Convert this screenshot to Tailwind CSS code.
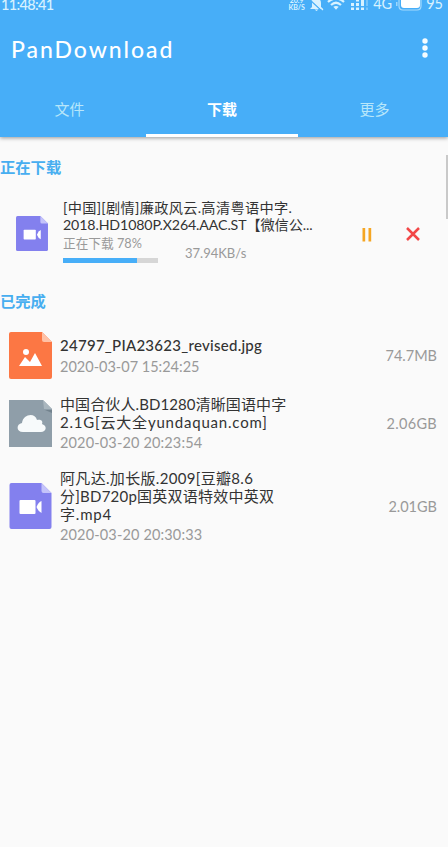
<!DOCTYPE html>
<html lang="zh-CN">
<head>
<meta charset="utf-8">
<title>PanDownload</title>
<script src="https://cdn.jsdelivr.net/npm/@tailwindcss/browser@4"></script>
</head>
<body class="w-[448px] h-[847px] overflow-hidden relative bg-[#fafafa] text-[#333] font-['Lato','Noto_Sans_CJK_SC',sans-serif] whitespace-nowrap">
<header class="h-[137px] bg-[#47aef8] text-white shadow-[0_1px_4px_rgba(0,0,0,0.4)] flex flex-col">
  <div class="h-[14px] flex justify-between overflow-hidden text-[#d8f2ff]">
    <span class="text-[14.5px] leading-[18px] -mt-[4px] pl-px tracking-[-0.65px] font-medium">11:48:41</span>
    <div class="flex items-start pr-[5px]">
      <div class="text-[7px] leading-[7px] -mt-[3px] font-bold text-center w-[17px]"><p>20.9</p><p>KB/S</p></div>
      <svg class="ml-[4px] -mt-[2px]" width="15" height="14" viewBox="0 0 15 14"><path d="M3 9V5C3 2 5 0 7.500 0S12 2 12 5v4l2 2H1zM5.500 11.500h4l-2 1.500z" fill="currentColor"/><path d="M0 1l13 12" stroke="#47aef8" stroke-width="1.300"/><path d="M1 0l13 12" stroke="currentColor" stroke-width="1.200"/></svg>
      <svg class="ml-[3px] -mt-[3px]" width="18" height="13" viewBox="0 0 18 13" fill="none" stroke="currentColor" stroke-width="2.200"><path d="M1 5Q9-2 17 5M4 8Q9 3.500 14 8"/><path d="M6.300 9.800Q9 8 11.700 9.800L9 12.800z" fill="currentColor" stroke="none"/></svg>
      <svg class="ml-[6px]" width="17" height="10" viewBox="0 0 17 10" fill="currentColor"><path d="M0 3h3v3H0zM0 7.500h3V10H0zM5 3h3v3H5zM5 7.500h3V10H5zM10 0h3v6h-3zM10 7.500h3V10h-3zM5 0h3v1.500H5z"/><path d="M15 0h2v6h-2zM15 7.500h2V10h-2z" opacity=".35"/></svg>
      <span class="ml-[5px] text-[14.5px] leading-[18px] -mt-[5px] w-[19px]">4G</span>
      <svg class="ml-[4px]" width="26" height="11" viewBox="0 0 26 11"><path d="M3-3v9q0 4 4 4h14q4 0 4-4v-9" fill="none" stroke="currentColor" stroke-width="1.200" opacity=".65"/><path d="M5-1h19v6q0 3-3 3H8Q5 8 5 5z" fill="white"/><path d="M0 2h1.500v4H0z" fill="currentColor" opacity=".6"/></svg>
      <span class="ml-[4px] text-[14.5px] leading-[18px] -mt-[5px]">95</span>
    </div>
  </div>
  <div class="h-[71px] flex justify-between pl-[11px] pr-[20px] pt-[20px]">
    <h1 class="text-[23px] leading-[31px] tracking-[1.95px] font-medium">PanDownload</h1>
    <svg class="mt-[4px]" width="6" height="20" viewBox="0 0 6 20" fill="#f4fcff"><circle cx="3" cy="3" r="2.700"/><circle cx="3" cy="10" r="2.700"/><circle cx="3" cy="17" r="2.700"/></svg>
  </div>
  <nav class="h-[52px] grid grid-cols-[146px_152px_150px] text-center text-[15px] leading-[48px] text-[#b7e6fa]">
    <span class="pr-[7px]">文件</span>
    <span class="text-white font-bold border-b-[3px] border-white">下载</span>
    <span class="pl-[3px]">更多</span>
  </nav>
</header>
<main>
  <h2 class="pt-[19px] text-[15.3px] leading-[22px] font-bold text-[#47aef0]">正在下载</h2>
  <section class="h-[112px] flex pt-[21px]">
    <svg class="ml-[16px] mt-[17px] shrink-0" width="32" height="35" viewBox="0 0 42 46"><path d="M2 0h30l10 10v34q0 2-2 2H2q-2 0-2-2V2q0-2 2-2z" fill="#8380ee"/><path d="M32 0l10 10h-8q-2 0-2-2z" fill="#c4c3fa"/><rect x="10" y="18" width="16" height="13" rx="1" fill="white"/><path d="M27.500 24.500q2-5 5-6v12q-3-1-5-6z" fill="white"/></svg>
    <div class="ml-[15px] w-[260px]">
      <div class="text-[14.2px] leading-[17px]"><p class="tracking-[0.32px]">[中国][剧情]廉政风云.高清粤语中字.</p><p class="tracking-[-0.12px]">2018.HD1080P.X264.AAC.ST【微信公...</p></div>
      <div class="flex text-[#999]">
        <div class="w-[122px]"><p class="text-[12.7px] leading-[20px]">正在下载 78%</p><div class="mt-[5px] w-[95px] h-[5px] bg-[#d6d6d6]"><div class="w-[78%] h-full bg-[#47aef8]"></div></div></div>
        <p class="pt-[11px] text-[13px] leading-[18px]">37.94KB/s</p>
      </div>
    </div>
    <svg class="ml-[39px] mt-[29px]" width="10" height="14" viewBox="0 0 10 14"><path d="M.5 0h2.700v13.500H.5zM6.500 0h2.700v13.500H6.500z" fill="#f5a623"/></svg>
    <svg class="ml-[34px] mt-[28px]" width="14" height="14" viewBox="0 0 14 14"><path d="M1 1l12 12M13 1L1 13" stroke="#f24848" stroke-width="2.500"/></svg>
  </section>
  <h2 class="text-[15.3px] leading-[22px] font-bold text-[#47aef0]">已完成</h2>
  <ul class="text-[15px] leading-[18px]">
    <li class="mt-[19px] h-[48px] flex items-center pl-[9px] pr-[11px]">
      <svg class="shrink-0" width="43" height="47" viewBox="0 0 43 47"><path d="M2 0h31l10 10v35q0 2-2 2H2q-2 0-2-2V2q0-2 2-2z" fill="#fc7744"/><path d="M33 0l10 10h-8q-2 0-2-2z" fill="#ffc1a6"/><circle cx="17" cy="20" r="3" fill="white"/><path d="M10 34l6-9 5 5 5-9 7 13z" fill="white"/></svg>
      <div class="ml-[8px] grow pt-px"><p class="leading-[21px] tracking-[0.27px] font-medium">24797_PIA23623_revised.jpg</p><p class="text-[14.5px] leading-[21px] text-[#999]">2020-03-07 15:24:25</p></div>
      <span class="pt-[2px] text-[14.5px] text-[#999]">74.7MB</span>
    </li>
    <li class="mt-[15px] h-[58px] flex items-center pl-[9px] pr-[11px]">
      <svg class="shrink-0" width="43" height="47" viewBox="0 0 43 47"><path d="M0 0h34l9 9v38H0z" fill="#8f9ea9"/><path d="M34 0l9 9h-8z" fill="#a9b6be"/><path d="M36 10h7v3z" fill="#73838e"/><path d="M14 32c-7 0-7-8-1-9 1-9 13-11 15-3 5-1 6 2 5 4 6 2 4 8-1 8z" fill="#f7fafb"/></svg>
      <div class="ml-[8px] grow pt-[3px]"><p class="tracking-[0.1px]">中国合伙人.BD1280清晰国语中字</p><p class="tracking-[0.8px]">2.1G[云大全yundaquan.com]</p><p class="text-[14.5px] leading-[23px] tracking-[0.15px] text-[#999]">2020-03-20 20:23:54</p></div>
      <span class="pt-[2px] text-[14.5px] tracking-[0.3px] text-[#999]">2.06GB</span>
    </li>
    <li class="mt-[16px] h-[76px] flex items-center pl-[9px] pr-[11px]">
      <svg class="shrink-0" width="43" height="46" viewBox="0 0 42 46"><path d="M2 0h30l10 10v34q0 2-2 2H2q-2 0-2-2V2q0-2 2-2z" fill="#8380ee"/><path d="M32 0l10 10h-8q-2 0-2-2z" fill="#c4c3fa"/><rect x="10" y="17" width="16" height="14" rx="1" fill="white"/><path d="M27 24q2-5 5-6v12q-3-1-5-6z" fill="white"/></svg>
      <div class="ml-[8px] grow pt-[2px]"><p class="tracking-[0.32px]">阿凡达.加长版.2009[豆瓣8.6</p><p class="tracking-[0.24px]">分]BD720p国英双语特效中英双</p><p class="tracking-[0.8px]">字.mp4</p><p class="text-[14.5px] leading-[23px] tracking-[0.15px] text-[#999]">2020-03-20 20:30:33</p></div>
      <span class="pt-[2px] text-[14.5px] text-[#999]">2.01GB</span>
    </li>
  </ul>
</main>
<div class="absolute right-0 top-[155px] w-[2px] h-[64px] bg-[#c9c9c9]"></div>
</body>
</html>
